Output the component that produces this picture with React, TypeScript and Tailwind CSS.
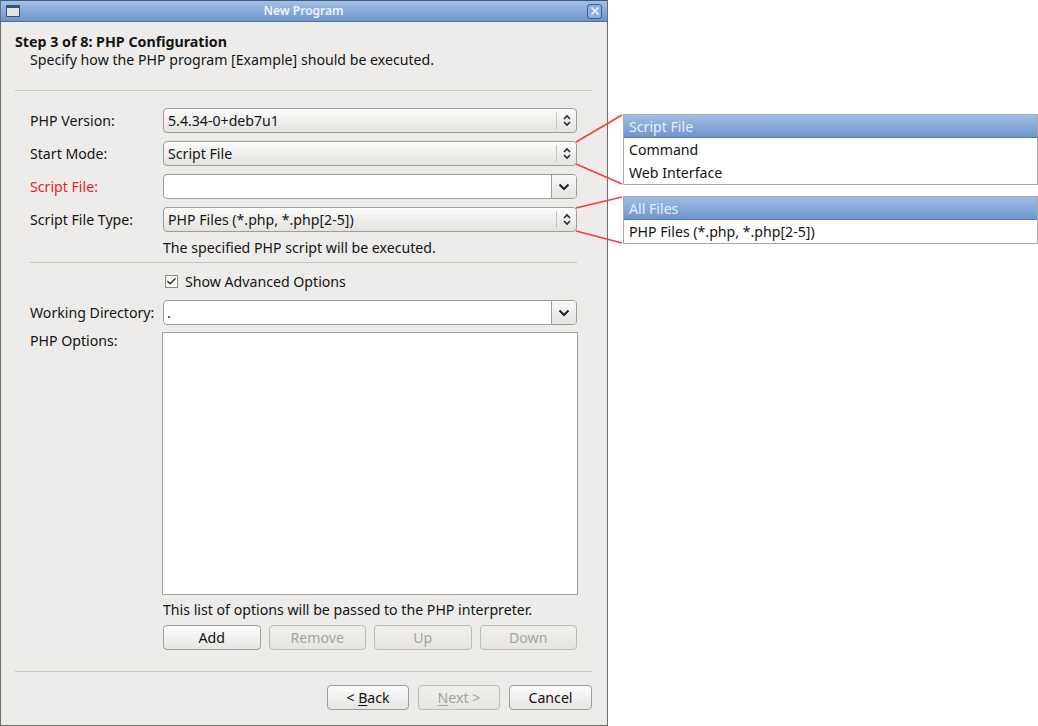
import { Check, X } from "lucide-react";

const FONT = "font-['Noto_Sans','Open_Sans',sans-serif]";

const Separator = ({ className = "" }: { className?: string }) => (
  <div className={`h-px bg-[#c9c7c3] ${className}`} />
);

const Label = ({ children, red, tall }: { children: string; red?: boolean; tall?: boolean }) => (
  <div className={`w-[133px] shrink-0 whitespace-nowrap ${tall ? "leading-[17px]" : "leading-[25px]"} ${red ? "text-[#ee1c1c]" : ""}`}>
    {children}
  </div>
);

// dropdown style combo with the up/down arrows
const Select = ({ value }: { value: string }) => (
  <div className="flex h-[25px] flex-1 items-center rounded-[4px] border border-[#9d9c98] bg-gradient-to-b from-[#fbfbfa] to-[#e4e3e0] pl-[4px] shadow-[inset_0_1px_0_#fff]">
    <span className="flex-1 leading-[23px]">{value}</span>
    <span className="h-[17px] w-px bg-[#c4c3bf]" />
    <span className="flex w-[19px] justify-center">
      <svg width="8" height="13" viewBox="0 0 8 13" fill="none" stroke="#2a2a2a" strokeWidth="1.6">
        <path d="M1 5 L4 2 L7 5" />
        <path d="M1 8 L4 11 L7 8" />
      </svg>
    </span>
  </div>
);

// editable combo, white field with a button on the right
const Combo = ({ value = "" }: { value?: string }) => (
  <div className="flex h-[25px] flex-1 items-stretch overflow-hidden rounded-[4px] border border-[#9d9c98] bg-white">
    <span className="flex-1 pl-[3px] leading-[23px]">{value}</span>
    <span className="flex w-[25px] items-center justify-center border-l border-[#9d9c98] bg-gradient-to-b from-[#f8f8f7] to-[#e4e3e0]">
      <svg width="12" height="8" viewBox="0 0 12 8" fill="none" stroke="#222" strokeWidth="2">
        <path d="M1.5 1.5 L6 6 L10.5 1.5" />
      </svg>
    </span>
  </div>
);

const Button = ({ children, disabled, className = "" }: { children: React.ReactNode; disabled?: boolean; className?: string }) => (
  <div
    className={`flex h-[25px] items-center justify-center rounded-[4px] border ${
      disabled
        ? "border-[#bdbcb8] bg-gradient-to-b from-[#f1f0ee] to-[#e6e5e2] text-[#a5a4a1]"
        : "border-[#9d9c98] bg-gradient-to-b from-[#fdfdfd] to-[#e6e5e3] text-[#111]"
    } ${className}`}
  >
    {children}
  </div>
);

const Dropdown = ({ selected, items, className = "" }: { selected: string; items: string[]; className?: string }) => (
  <div className={`border border-[#a8a8a8] bg-white ${className}`}>
    <div className="h-[23px] border-b border-[#4f79b3] bg-gradient-to-b from-[#a0bde3] to-[#6e96cc] pl-[5px] leading-[23px] text-[#e6edf6]">
      {selected}
    </div>
    {items.map((item) => (
      <div key={item} className="h-[23px] pl-[5px] leading-[23px]">
        {item}
      </div>
    ))}
  </div>
);

const App = () => {
  return (
    <div className={`relative flex h-[726px] w-[1038px] overflow-hidden bg-white text-[14.15px] text-[#141414] ${FONT}`}>
      {/* Dialog window */}
      <div className="flex h-[726px] w-[608px] shrink-0 flex-col border-x border-b border-[#6f6e6b] bg-[#edecea]">
        <div className="flex h-[22px] shrink-0 items-center border-y border-t-[#3d5a86] border-b-[#4c72a8] bg-gradient-to-b from-[#a3c0e6] to-[#6d95cb] px-[5px]">
          <span className="flex h-[12px] w-[14px] rounded-[1px] border border-[#39506f] border-t-[3px] bg-[#dfe3e2]" />
          <span className="flex-1 text-center text-[12px] font-semibold text-[#eef3fa]">New Program</span>
          <span className="flex h-[15px] w-[15px] items-center justify-center rounded-[3px] border border-[#3f5f8c] bg-[#8fb0da]">
            <X size={12} strokeWidth={3.5} className="text-[#eef3fa]" />
          </span>
        </div>

        <div className="flex flex-1 flex-col pl-[14px] pr-[15px]">
          <div className="pt-[10px] text-[14.25px] font-bold leading-[19px]">Step 3 of 8: PHP Configuration</div>
          <div className="pl-[15px] leading-[18px]">Specify how the PHP program [Example] should be executed.</div>
          <Separator className="mt-[21px]" />

          <div className="flex flex-col pl-[15px] pr-[15px] pt-[17px]">
            <div className="flex flex-col gap-[8px]">
              <div className="flex">
                <Label>PHP Version:</Label>
                <Select value="5.4.34-0+deb7u1" />
              </div>
              <div className="flex">
                <Label>Start Mode:</Label>
                <Select value="Script File" />
              </div>
              <div className="flex">
                <Label red>Script File:</Label>
                <Combo />
              </div>
              <div className="flex">
                <Label>Script File Type:</Label>
                <Select value="PHP Files (*.php, *.php[2-5])" />
              </div>
            </div>
            <div className="pl-[133px] pt-[6px] leading-[19px]">The specified PHP script will be executed.</div>
            <Separator className="mt-[5px]" />

            <div className="flex h-[37px] items-center pl-[135px]">
              <span className="flex h-[13px] w-[13px] items-center justify-center border border-[#8a8986] bg-[#f8f8f7]">
                <Check size={11} strokeWidth={3} className="text-[#2a2a2a]" />
              </span>
              <span className="pl-[7px]">Show Advanced Options</span>
            </div>

            <div className="flex">
              <Label>Working Directory:</Label>
              <Combo value="." />
            </div>

            <div className="flex pt-[7px]">
              <Label tall>PHP Options:</Label>
              <div className="-mx-px h-[263px] flex-1 border border-[#a3a29e] bg-white" />
            </div>

            <div className="pl-[133px] pt-[5px] leading-[20px]">This list of options will be passed to the PHP interpreter.</div>
            <div className="grid grid-cols-4 gap-[8px] pl-[133px] pt-[5px]">
              <Button>Add</Button>
              <Button disabled>Remove</Button>
              <Button disabled>Up</Button>
              <Button disabled>Down</Button>
            </div>
          </div>

          <Separator className="mt-[21px]" />
          <div className="flex justify-end gap-[9px] pt-[13px]">
            <Button className="w-[82px]">
              &lt;&nbsp;<span className="underline underline-offset-2">B</span>ack
            </Button>
            <Button disabled className="w-[82px]">
              <span className="underline underline-offset-2">N</span>ext &gt;
            </Button>
            <Button className="w-[83px]">Cancel</Button>
          </div>
        </div>
      </div>

      {/* Option lists shown next to the dialog */}
      <div className="flex flex-1 flex-col pl-[15px] pt-[114px]">
        <Dropdown selected="Script File" items={["Command", "Web Interface"]} />
        <Dropdown selected="All Files" items={["PHP Files (*.php, *.php[2-5])"]} className="mt-[11px]" />
      </div>

      {/* Red leader lines */}
      <svg className="pointer-events-none absolute left-0 top-0" width="1038" height="726">
        <g stroke="#fb3a3e" strokeWidth="1.5" fill="none">
          <line x1="576" y1="142" x2="622" y2="115" />
          <line x1="576" y1="164" x2="622" y2="184" />
          <line x1="576" y1="208" x2="622" y2="197" />
          <line x1="576" y1="231" x2="622" y2="243" />
        </g>
      </svg>
    </div>
  );
};

export default App;
